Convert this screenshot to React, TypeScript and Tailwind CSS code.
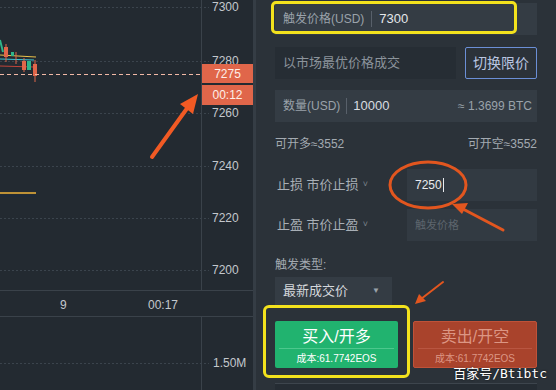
import React from 'react';

const priceTicks = [
  { label: '7300', y: 7 },
  { label: '7280', y: 61 },
  { label: '7260', y: 113 },
  { label: '7240', y: 166 },
  { label: '7220', y: 218 },
  { label: '7200', y: 270 },
];

function Chart() {
  return (
    <div className="flex w-[256px] shrink-0 flex-col border-r-[3px] border-[#353d45] bg-[#232a31]">
      {/* price area */}
      <div className="relative h-[291px] border-b border-[#3a424a]">
        <svg className="absolute inset-0" width="253" height="291" viewBox="0 0 253 291">
          {priceTicks.map(t => (
            <line key={t.label} x1="0" x2="209" y1={t.y + 0.5} y2={t.y + 0.5} stroke="#3b444d" strokeDasharray="2 2" />
          ))}
          <line x1="201.5" x2="201.5" y1="0" y2="291" stroke="#3a424a" />
          {/* candles + MA lines */}
          <line x1="0" x2="36" y1="55" y2="57" stroke="#e8c04a" strokeWidth="1.2" />
          <line x1="0" x2="34" y1="59" y2="60" stroke="#3cc6d8" strokeWidth="1.2" />
          <line x1="0" x2="34" y1="66" y2="67" stroke="#c0443a" strokeWidth="1" />
          <line x1="0" x2="3" y1="40" y2="52" stroke="#2fb58a" strokeWidth="2" />
          <rect x="4" y="47" width="4" height="10" fill="#e0664a" />
          <line x1="6" x2="6" y1="44" y2="62" stroke="#e0664a" />
          <rect x="11" y="52" width="3" height="4" fill="#2fb58a" />
          <line x1="16" x2="16" y1="52" y2="64" stroke="#e0664a" />
          <rect x="22" y="61" width="4" height="9" fill="#e0664a" />
          <line x1="24" x2="24" y1="58" y2="72" stroke="#e0664a" />
          <rect x="27" y="61" width="4" height="9" fill="#2fb58a" />
          <rect x="33" y="64" width="4" height="12" fill="#e0664a" />
          <line x1="35" x2="35" y1="60" y2="82" stroke="#e0664a" />
          {/* current price line */}
          <line x1="0" x2="204" y1="74.5" y2="74.5" stroke="#f2b9a6" strokeDasharray="4 3" />
          <line x1="0" x2="36" y1="193" y2="193" stroke="#f2b53a" strokeWidth="1.5" />
          <line x1="0" x2="36" y1="196" y2="196" stroke="#1c2a3c" strokeWidth="1.5" />
        </svg>
        {priceTicks.map(t => (
          <span key={t.label} className="absolute left-[212px] text-[12px] leading-[14px] text-[#c3c8cd]" style={{ top: t.y - 7 }}>
            {t.label}
          </span>
        ))}
        <div className="absolute left-[202px] top-[64px] flex h-[19px] w-[51px] items-center justify-center bg-[#e0664a] text-[12px] text-[#fdeee8]">7275</div>
        <div className="absolute left-[202px] top-[85px] flex h-[20px] w-[51px] items-center justify-center bg-[#e0664a] text-[12px] text-[#fdeee8]">00:12</div>
      </div>
      {/* time axis */}
      <div className="relative h-[26px] border-b border-[#3a424a] text-[12px] text-[#c3c8cd]">
        <span className="absolute left-[60px] top-[5px]">9</span>
        <span className="absolute left-[148px] top-[5px]">00:17</span>
      </div>
      {/* volume */}
      <div className="relative flex-1">
        <svg className="absolute inset-0" width="253" height="73" viewBox="0 0 253 73">
          <line x1="201.5" x2="201.5" y1="0" y2="73" stroke="#3a424a" />
          <line x1="0" x2="209" y1="46.5" y2="46.5" stroke="#3b444d" strokeDasharray="2 2" />
        </svg>
        <span className="absolute left-[213px] top-[39px] text-[12px] leading-[14px] text-[#c3c8cd]">1.50M</span>
      </div>
    </div>
  );
}

function Caret() {
  return <span className="ml-1 text-[9px] text-[#7d858d]">˅</span>;
}

function TradePanel() {
  return (
    <div className="relative flex flex-1 flex-col bg-[#2b3239] px-[19px] pt-[3px]">
      <div className="flex h-8 items-center bg-[#343c44] pl-2">
        <span className="text-[12px] text-[#9aa2aa]">触发价格(USD)</span>
        <span className="mx-[7px] h-4 w-px bg-[#58606a]" />
        <span className="text-[13px] text-[#e4e7ea]">7300</span>
      </div>

      <div className="mt-3 flex h-8 gap-[9px]">
        <div className="flex flex-1 items-center bg-[#262d34] pl-2 text-[13px] text-[#8c949c]">以市场最优价格成交</div>
        <div className="flex w-[72px] items-center justify-center rounded-[2px] border border-[#6b8fd6] text-[14px] text-[#b9c6e2]">切换限价</div>
      </div>

      <div className="mt-[11px] flex h-8 items-center bg-[#343c44] pl-2 pr-[5px]">
        <span className="text-[12px] text-[#9aa2aa]">数量(USD)</span>
        <span className="mx-[6px] h-4 w-px bg-[#58606a]" />
        <span className="text-[13px] text-[#d8dce0]">10000</span>
        <span className="ml-auto text-[12px] text-[#9aa2aa]">≈ 1.3699 BTC</span>
      </div>

      <div className="mt-[14px] flex h-4 items-center justify-between text-[12px] text-[#a3aab1]">
        <span>可开多≈3552</span>
        <span>可开空≈3552</span>
      </div>

      <div className="mt-[17px] flex h-8 items-center">
        <div className="flex w-[130px] items-center pl-[2px] text-[13px] text-[#a8afb6]">
          止损 市价止损<Caret />
        </div>
        <div className="ml-auto flex h-8 w-[130px] items-center bg-[#323a42] pl-2 text-[12px] text-[#e8ebee]">
          7250<span className="ml-px h-[14px] w-px bg-[#e8ebee]" />
        </div>
      </div>

      <div className="mt-2 flex h-8 items-center">
        <div className="flex w-[130px] items-center pl-[2px] text-[13px] text-[#a8afb6]">
          止盈 市价止盈<Caret />
        </div>
        <div className="ml-auto flex h-8 w-[130px] items-center bg-[#323a42] pl-2 text-[11px] text-[#5d656d]">触发价格</div>
      </div>

      <div className="mt-4 flex h-4 items-center text-[12px] text-[#a3aab1]">触发类型:</div>

      <div className="mt-1 flex h-7 w-[117px] items-center bg-[#343c44] pl-2 pr-3 text-[13px] text-[#d4d8dc]">
        最新成交价
        <span className="ml-auto text-[8px] text-[#9aa2aa]">▼</span>
      </div>

      <div className="mt-4 flex h-[47px] gap-[15px]">
        <div className="flex w-[123px] flex-col rounded-[2px] bg-[#21b36f] text-white">
          <div className="flex h-[26px] items-end justify-center text-[16px] leading-[20px]">买入/开多</div>
          <div className="mx-1 mt-[1px] h-px bg-[#4cc88d]" />
          <div className="flex flex-1 items-center justify-center text-[10px]">成本:61.7742EOS</div>
        </div>
        <div className="flex flex-1 flex-col rounded-[2px] border border-[#bf5239] bg-[#a9432c] text-[#dc9684]">
          <div className="flex h-[25px] items-end justify-center text-[16px] leading-[20px]">卖出/开空</div>
          <div className="mx-1 mt-[1px] h-px bg-[#b95641]" />
          <div className="flex flex-1 items-center justify-center text-[10px]">成本:61.7742EOS</div>
        </div>
      </div>

      <div className="mt-[15px] h-px bg-[#3d454d]" />
      <div className="flex-1 bg-[#252c33]" />

      {/* annotations */}
      <div className="pointer-events-none absolute left-[15px] top-[1px] h-[33px] w-[246px] rounded-[5px] border-[3px] border-[#f3e21d]" />
      <div className="pointer-events-none absolute left-[7px] top-[305px] h-[73px] w-[147px] rounded-[6px] border-[3px] border-[#f3e21d]" />
      <div className="absolute right-[9px] top-[366px] font-['DejaVu_Sans_Mono','Noto_Sans_CJK_SC',monospace] text-[13px] leading-[16px] text-white [text-shadow:0_0_2px_rgba(0,0,0,0.8)]">
        百家号/Btibtc
      </div>
    </div>
  );
}

function Annotations() {
  return (
    <svg className="pointer-events-none absolute inset-0" width="556" height="390" viewBox="0 0 556 390">
      {/* chart arrow */}
      <line x1="152" y1="157" x2="188" y2="107" stroke="#f15a24" strokeWidth="4" strokeLinecap="round" />
      <polygon points="198,94 180,104 193,114" fill="#f15a24" />
      {/* ellipse around stop loss */}
      <ellipse cx="428" cy="185" rx="38" ry="23" fill="none" stroke="#e2561f" strokeWidth="3" />
      {/* stop loss arrow */}
      <line x1="503" y1="230" x2="463" y2="209" stroke="#e2561f" strokeWidth="3" strokeLinecap="round" />
      <polygon points="452,204 468,203 462,214" fill="#e2561f" />
      {/* buy arrow */}
      <line x1="443" y1="282" x2="421" y2="299" stroke="#e2561f" strokeWidth="2" strokeLinecap="round" />
      <polygon points="415,304 419,294 426,301" fill="#e2561f" />
    </svg>
  );
}

export default function App() {
  return (
    <div className="relative flex h-[390px] w-[556px] overflow-hidden bg-[#232a31] font-['Liberation_Sans','Noto_Sans_CJK_SC',sans-serif]">
      <Chart />
      <TradePanel />
      <Annotations />
    </div>
  );
}
